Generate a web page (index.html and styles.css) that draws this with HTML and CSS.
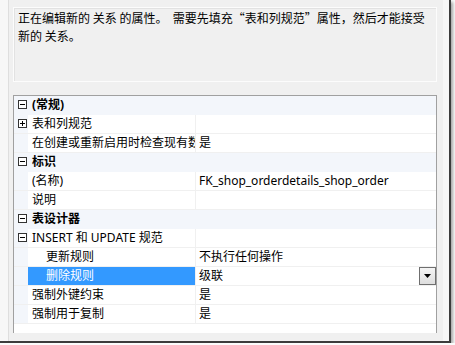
FILE: index.html
```html
<!DOCTYPE html>
<html lang="zh-CN">
<head>
    <meta charset="UTF-8">
    <title>关系属性</title>
    <link rel="stylesheet" href="styles.css">
</head>
<body>
    <div class="window">
        <div class="edge"></div>
        <div class="panel">
            <div class="desc">
                <div class="line">正在编辑新的 关系 的属性。&nbsp; 需要先填充“表和列规范”属性，然后才能接受</div>
                <div class="line">新的 关系。</div>
            </div>

            <div class="grid">
                <div class="row cat">
                    <div class="gut"><span class="box minus"></span></div>
                    <div class="title">(常规)</div>
                </div>
                <div class="row">
                    <div class="gut"><span class="box plus"></span></div>
                    <div class="name">表和列规范</div>
                    <div class="val"></div>
                </div>
                <div class="row">
                    <div class="gut"></div>
                    <div class="name">在创建或重新启用时检查现有数据</div>
                    <div class="val">是</div>
                </div>
                <div class="row cat">
                    <div class="gut"><span class="box minus"></span></div>
                    <div class="title">标识</div>
                </div>
                <div class="row">
                    <div class="gut"></div>
                    <div class="name">(名称)</div>
                    <div class="val">FK_shop_orderdetails_shop_order</div>
                </div>
                <div class="row">
                    <div class="gut"></div>
                    <div class="name">说明</div>
                    <div class="val"></div>
                </div>
                <div class="row cat">
                    <div class="gut"><span class="box minus"></span></div>
                    <div class="title">表设计器</div>
                </div>
                <div class="row">
                    <div class="gut"><span class="box minus"></span></div>
                    <div class="name">INSERT 和 UPDATE 规范</div>
                    <div class="val"></div>
                </div>
                <div class="row">
                    <div class="gut"></div>
                    <div class="name sub">更新规则</div>
                    <div class="val">不执行任何操作</div>
                </div>
                <div class="row">
                    <div class="gut"></div>
                    <div class="name sub selected">删除规则</div>
                    <div class="val">级联<span class="drop"><svg width="7" height="4" viewBox="0 0 7 4"><path d="M0 0h7L3.5 4z" fill="#000"/></svg></span></div>
                </div>
                <div class="row">
                    <div class="gut"></div>
                    <div class="name">强制外键约束</div>
                    <div class="val">是</div>
                </div>
                <div class="row">
                    <div class="gut"></div>
                    <div class="name">强制用于复制</div>
                    <div class="val">是</div>
                </div>
            </div>
        </div>
        <div class="edge right"></div>
    </div>
</body>
</html>
```

FILE: styles.css
```css
body {
    margin: 0;
    background: #fbfbfb;
    font-family: "Noto Sans", "Noto Sans CJK SC", sans-serif;
    font-size: 12px;
    color: #000;
}

.window {
    display: flex;
    width: 449px;
    height: 341px;
    border-right: 2px solid #3c3c3c;
    border-bottom: 2px solid #3c3c3c;
    box-shadow: 2px 2px 3px rgba(0, 0, 0, 0.35);
    background: #f0f0f0;
}

.edge {
    width: 8px;
    background: #f7f7f7;
}

.edge.right {
    width: 6px;
}

.panel {
    flex: 1;
    padding: 7px 6px 8px 4px;
    border-left: 1px solid #dedede;
    display: flex;
    flex-direction: column;
    gap: 13px;
}

.desc {
    height: 72px;
    padding: 1px 0 0 4px;
    background: #f0f0f0;
    border: 1px solid #fcfcfc;
    box-shadow: inset 1px 1px 0 #e2e2e2;
    font-family: "Noto Sans CJK SC", sans-serif;
}

.line {
    height: 18px;
    line-height: 18px;
    white-space: nowrap;
}

.grid {
    height: 238px;
    background: #fff;
    border: 1px solid #a0a0a0;
    border-bottom: none;
    overflow: hidden;
}

.row {
    display: flex;
    height: 18px;
    line-height: 18px;
    border-bottom: 1px solid #f0f0f0;
}

.gut {
    width: 14px;
    flex: none;
    background: #f3f6fb;
    display: flex;
    align-items: center;
    justify-content: center;
}

.cat {
    background: #f3f6fb;
    border-bottom-color: #f3f6fb;
}

.title {
    padding-left: 4px;
    font-weight: bold;
}

.name {
    width: 163px;
    flex: none;
    padding-left: 4px;
    border-right: 1px solid #f0f0f0;
    white-space: nowrap;
    overflow: hidden;
}

.name.sub {
    padding-left: 18px;
    width: 149px;
}

.name.selected {
    background: #3399ff;
    color: #fff;
}

.val {
    flex: 1;
    padding-left: 3px;
    position: relative;
    white-space: nowrap;
}

.box {
    position: relative;
    width: 7px;
    height: 7px;
    border: 1px solid #333;
    background: #fff;
    margin-left: 2px;
}

.box::before,
.box::after {
    content: "";
    position: absolute;
    background: #000;
}

.box::before {
    left: 1px;
    top: 3px;
    width: 5px;
    height: 1px;
}

.box.plus::after {
    left: 3px;
    top: 1px;
    width: 1px;
    height: 5px;
}

.drop {
    position: absolute;
    right: 0;
    top: 0;
    width: 15px;
    height: 16px;
    border: 1px solid #6f6f6f;
    background: linear-gradient(#f4f4f4, #dedede);
    display: flex;
    align-items: center;
    justify-content: center;
}
```
